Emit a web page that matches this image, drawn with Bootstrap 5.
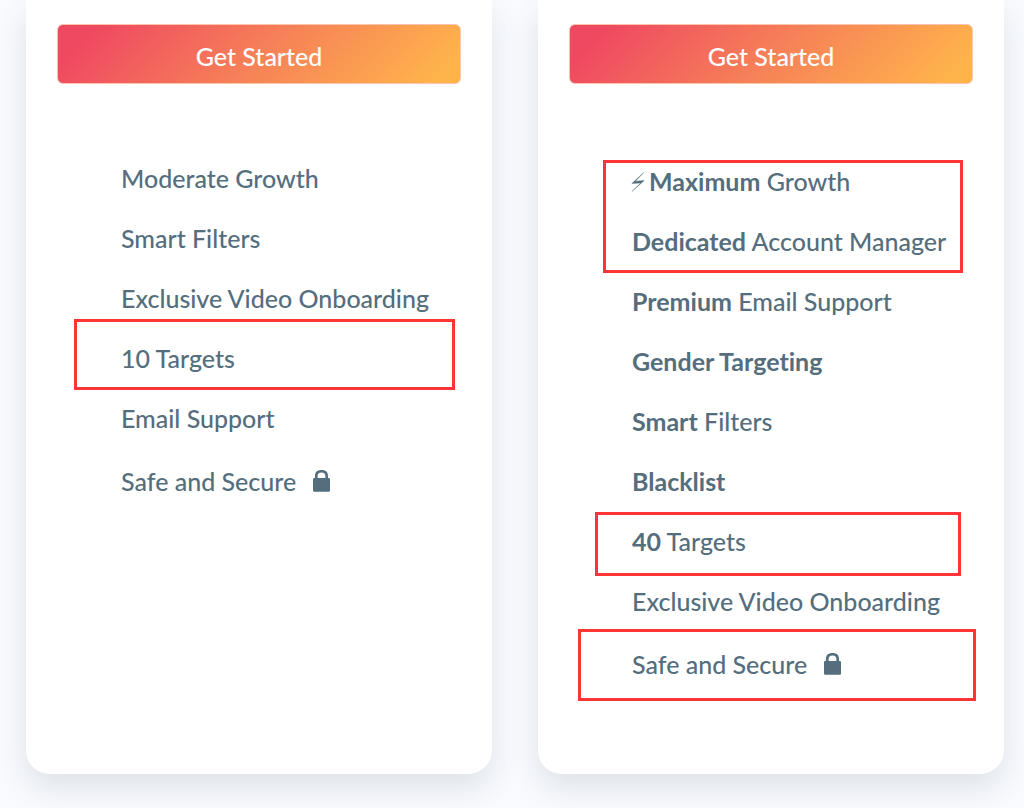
<!DOCTYPE html>
<html lang="en">
<head>
<meta charset="utf-8">
<meta name="viewport" content="width=device-width, initial-scale=1">
<title>Pricing plans</title>
<link href="https://cdn.jsdelivr.net/npm/bootstrap@5.3.0/dist/css/bootstrap.min.css" rel="stylesheet">
<style>
  body { background: #f9fbff; color: #546e7d; font-family: Lato, "Liberation Sans", sans-serif; font-size: 25px; font-weight: 500; font-variant-ligatures: none; }
  .plans { gap: 46px; padding: 0 20px 34px 26px; }
  .plan { flex: 1 1 0; min-width: 0; padding: 24px 31px 76px; background: #fff; border-radius: 0 0 24px 24px; box-shadow: 0 14px 32px rgba(60, 70, 80, .14); }
  .btn-start { height: 60px; padding: 4px 0 0; color: #fff; font-size: 25px; font-weight: 500; line-height: 1; border: 1px solid #ffc4ae; border-radius: 6px; background: linear-gradient(135deg, #ef4861 8%, #f68058 50%, #ffb44b 94%) border-box; }
  .btn-start:hover { color: #fff; }
  .features { margin: 64px 0 0 64px; }
  .features li { height: 60px; line-height: 60px; white-space: nowrap; }
  .features li:last-child { height: 67px; line-height: 67px; }
  .plan-pro .features { margin: 67px 0 0 63px; }
  .frame { position: absolute; border: 3px solid #fd3635; pointer-events: none; }
  .frame-ten { inset: -9px 6px -2px -47px; }
  .frame-growth { inset: 9px 10px -62px -29px; }
  .frame-forty { inset: 1px 12px -5px -37px; }
  .frame-safe { inset: -2px -3px -3px -54px; }
  .lock { width: 17px; height: 22px; margin: -8px 0 0 11px; }
  .bolt { width: 14px; height: 20px; margin: -5px 4px 0 -1px; }
</style>
</head>
<body>
<svg class="d-none" aria-hidden="true">
  <symbol id="lock" viewBox="0 0 17 22"><path fill="currentColor" fill-rule="evenodd" d="M2 8V6C2 2 4.300 0 8.500 0S15 2 15 6v2h.8q1.200 0 1.200 1.200v11.300q0 1.200-1.200 1.200H1.200Q0 21.700 0 20.500V9.200Q0 8 1.200 8ZM4.600 8h7.800V6c0-2.200-1.300-3.600-3.900-3.600S4.600 3.800 4.600 6Z"/></symbol>
  <symbol id="bolt" viewBox="0 0 14 20"><path fill="currentColor" stroke="currentColor" stroke-width=".4" d="M12.800.5.800 11.600l8.800-.7L1 19.500 13.200 8.500l-8.800.7Z"/></symbol>
</svg>
<main class="plans d-flex align-items-stretch">
  <section class="plan" aria-label="Moderate plan">
    <button type="button" class="btn btn-start d-block w-100">Get Started</button>
    <ul class="features list-unstyled">
      <li>Moderate Growth</li>
      <li>Smart Filters</li>
      <li>Exclusive Video Onboarding</li>
      <li class="position-relative">10 Targets<span class="frame frame-ten"></span></li>
      <li>Email Support</li>
      <li>Safe and Secure <svg class="lock" aria-hidden="true"><use href="#lock"/></svg></li>
    </ul>
  </section>
  <section class="plan plan-pro" aria-label="Maximum plan">
    <button type="button" class="btn btn-start d-block w-100">Get Started</button>
    <ul class="features list-unstyled">
      <li class="position-relative"><svg class="bolt" aria-hidden="true"><use href="#bolt"/></svg><b>Maximum</b> Growth<span class="frame frame-growth"></span></li>
      <li><b>Dedicated</b> Account Manager</li>
      <li><b>Premium</b> Email Support</li>
      <li><b>Gender Targeting</b></li>
      <li><b>Smart</b> Filters</li>
      <li><b>Blacklist</b></li>
      <li class="position-relative"><b>40</b> Targets<span class="frame frame-forty"></span></li>
      <li>Exclusive Video Onboarding</li>
      <li class="position-relative">Safe and Secure <svg class="lock" aria-hidden="true"><use href="#lock"/></svg><span class="frame frame-safe"></span></li>
    </ul>
  </section>
</main>
<script src="https://cdn.jsdelivr.net/npm/bootstrap@5.3.0/dist/js/bootstrap.bundle.min.js"></script>
</body>
</html>
